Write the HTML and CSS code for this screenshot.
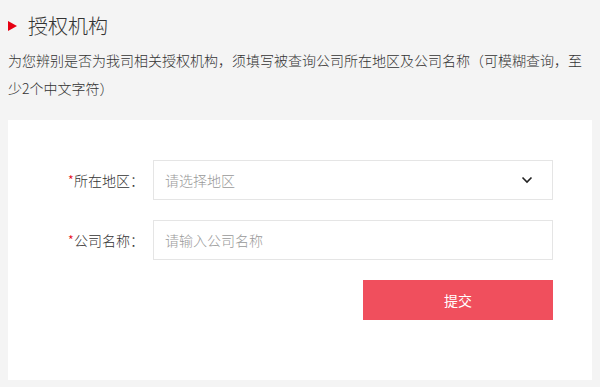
FILE: index.html
```html
<!DOCTYPE html>
<html lang="zh-CN">
<head>
    <meta charset="UTF-8">
    <meta name="viewport" content="width=device-width, initial-scale=1.0">
    <title>授权机构</title>
    <link rel="stylesheet" href="styles.css">
</head>
<body>
    <div class="page">
        <div class="page-title">
            <span class="title-mark"></span>
            <span>授权机构</span>
        </div>
        <p class="page-desc">为您辨别是否为我司相关授权机构，须填写被查询公司所在地区及公司名称（可模糊查询，至少2个中文字符）</p>

        <form class="query-card" onsubmit="return false;">
            <div class="form-row">
                <label class="form-label"><span class="required">*</span>所在地区：</label>
                <div class="form-field select-box">
                    <span class="placeholder">请选择地区</span>
                    <svg class="chevron" width="12" height="8" viewBox="0 0 12 8">
                        <path d="M1.5 1.5 L6 6 L10.5 1.5" fill="none" stroke="#222" stroke-width="1.6"/>
                    </svg>
                </div>
            </div>
            <div class="form-row">
                <label class="form-label"><span class="required">*</span>公司名称：</label>
                <input type="text" class="form-field text-input" placeholder="请输入公司名称">
            </div>
            <div class="form-row">
                <div class="form-label"></div>
                <div class="form-actions">
                    <button type="submit" class="submit-btn">提交</button>
                </div>
            </div>
        </form>
    </div>
</body>
</html>
```

FILE: styles.css
```css
body {
    margin: 0;
    background: #f4f4f4;
    font-family: "Noto Sans CJK SC", "Noto Sans", sans-serif;
    font-weight: 300;
    color: #333;
}

.page {
    padding: 10px 8px 7px;
}

.page-title {
    display: flex;
    align-items: center;
    font-size: 20px;
    line-height: 32px;
    color: #333;
}

.title-mark {
    width: 0;
    height: 0;
    border-top: 5px solid transparent;
    border-bottom: 5px solid transparent;
    border-left: 9px solid #e60012;
    margin-right: 11px;
}

.page-desc {
    margin: 4px 0 18px;
    font-size: 14px;
    line-height: 28px;
    color: #333;
}

.query-card {
    background: #fff;
    padding: 40px 0 60px;
    display: flex;
    flex-direction: column;
    gap: 20px;
}

.form-row {
    display: flex;
    align-items: center;
}

.form-label {
    width: 145px;
    box-sizing: border-box;
    padding-right: 9px;
    text-align: right;
    font-size: 14px;
    color: #333;
}

.required {
    color: #e60012;
}

.form-field {
    width: 400px;
    height: 40px;
    box-sizing: border-box;
    border: 1px solid #e5e5e5;
    background: #fff;
    padding: 0 11px;
    font-size: 14px;
    font-family: inherit;
    font-weight: inherit;
    outline: none;
}

.select-box {
    display: flex;
    align-items: center;
    justify-content: space-between;
    padding-right: 19px;
}

.placeholder {
    color: #999;
}

.text-input::placeholder {
    color: #999;
}

.form-actions {
    width: 400px;
    display: flex;
    justify-content: flex-end;
}

.submit-btn {
    width: 190px;
    height: 40px;
    border: none;
    background: #f04f5d;
    color: #fff;
    font-size: 14px;
    font-family: inherit;
    font-weight: 400;
    cursor: pointer;
}
```
